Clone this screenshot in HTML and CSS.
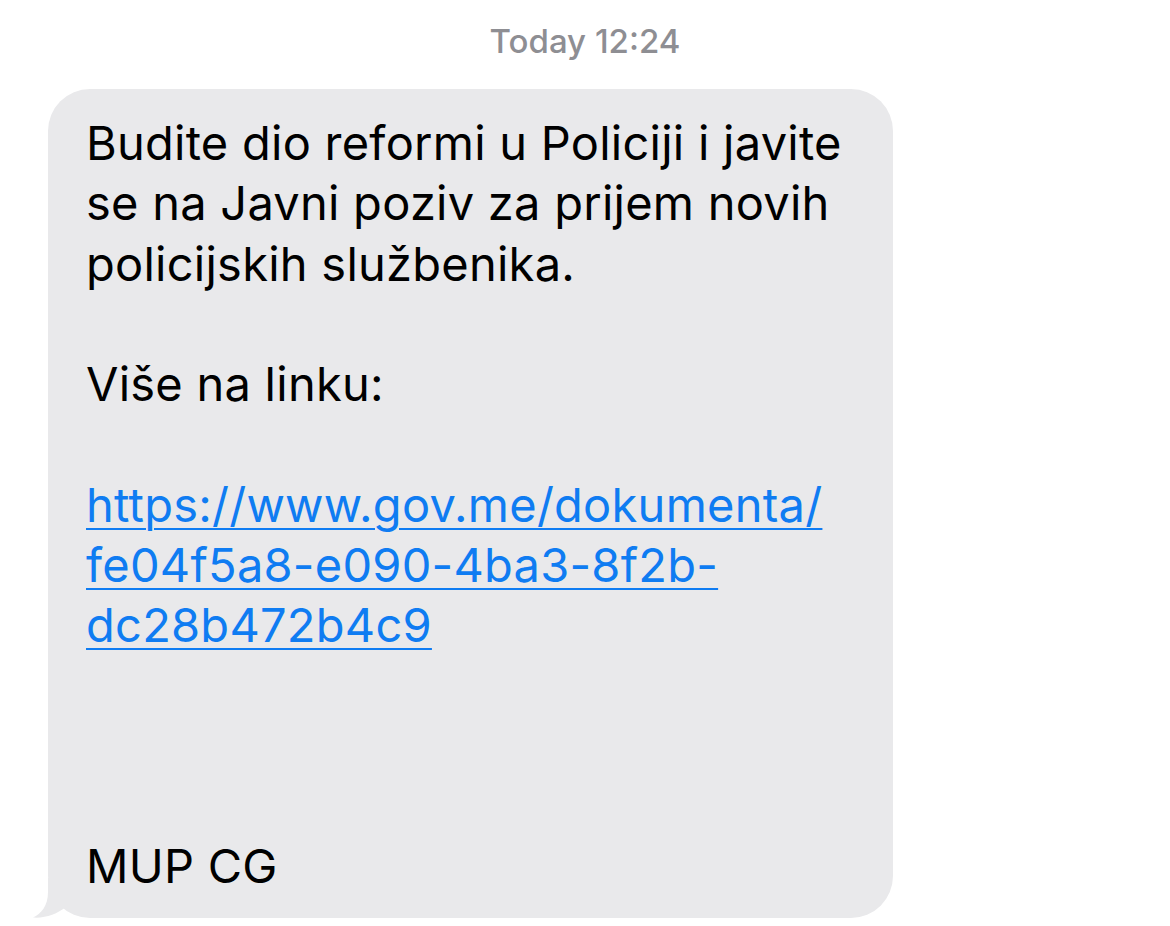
FILE: index.html
```html
<!DOCTYPE html>
<html>
<head>
<meta charset="utf-8">
<title>Messages</title>
<link rel="stylesheet" href="styles.css">
</head>
<body>
<div id="thread">
	<div class="stamp">Today 12:24</div>
	<div class="bubble">
		<p class="text">Budite dio reformi u Policiji i javite<br>se na Javni poziv za prijem novih<br>policijskih službenika.<br><br>Više na linku:<br><br><a href="#">https://www.gov.me/dokumenta/<br>fe04f5a8-e090-4ba3-8f2b-<br>dc28b472b4c9</a><br><br><br><br>MUP CG</p>
		<svg class="tail" width="50" height="40" viewBox="0 0 50 40"><path d="M16,0 L16,14 C16,28 9,36 1,39.5 C13,40.5 25,36 34,29 L34,0 Z"/></svg>
	</div>
</div>
</body>
</html>
```

FILE: styles.css
```css
html, body {
	margin: 0;
	background: white;
	font-family: Inter, "Noto Sans", sans-serif;
}
#thread {
	padding-top: 21px;
}
.stamp {
	text-align: center;
	color: #8e8e93;
	font-size: 33px;
	font-weight: 500;
	line-height: 40px;
	margin-bottom: 28px;
}
.bubble {
	position: relative;
	width: 845px;
	box-sizing: border-box;
	margin-left: 48px;
	background: #e9e9eb;
	border-radius: 42px;
	padding: 24px 20px 22px 38px;
}
.text {
	margin: 0;
	font-size: 47px;
	letter-spacing: 0.25px;
	line-height: 60.25px;
	color: black;
}
.text a {
	color: #0f7cf2;
	text-decoration: underline;
	text-decoration-thickness: 2px;
	text-underline-offset: 6px;
}
.tail {
	position: absolute;
	left: -16px;
	bottom: 0;
	fill: #e9e9eb;
}
```
